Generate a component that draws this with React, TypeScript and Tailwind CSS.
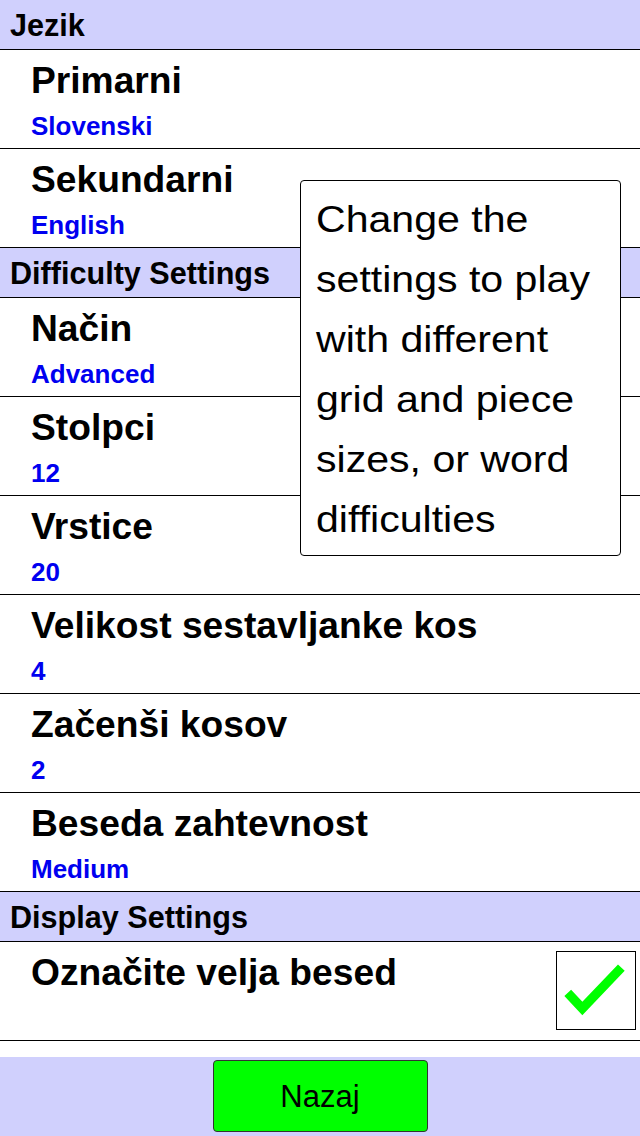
import { Fragment } from 'react';

type Row = { title: string; value?: string; checked?: boolean };
type Section = { heading: string; rows: Row[] };

const sections: Section[] = [
    {
        heading: 'Jezik',
        rows: [
            { title: 'Primarni', value: 'Slovenski' },
            { title: 'Sekundarni', value: 'English' },
        ],
    },
    {
        heading: 'Difficulty Settings',
        rows: [
            { title: 'Način', value: 'Advanced' },
            { title: 'Stolpci', value: '12' },
            { title: 'Vrstice', value: '20' },
            { title: 'Velikost sestavljanke kos', value: '4' },
            { title: 'Začenši kosov', value: '2' },
            { title: 'Beseda zahtevnost', value: 'Medium' },
        ],
    },
    {
        heading: 'Display Settings',
        rows: [{ title: 'Označite velja besed', checked: true }],
    },
];

const tipLines = [
    'Change the',
    'settings to play',
    'with different',
    'grid and piece',
    'sizes, or word',
    'difficulties',
];

function CheckBox({ checked }: { checked: boolean }) {
    return (
        <div className="w-[80px] h-[79px] border border-black bg-white">
            {checked && (
                <svg viewBox="0 0 80 79" className="w-full h-full">
                    <path d="M11 42 L26 58 L66 16" fill="none" stroke="#00ff00" strokeWidth="9.5" strokeLinejoin="miter" />
                </svg>
            )}
        </div>
    );
}

export default function App() {
    return (
        <div className="relative w-[640px] h-[1136px] bg-white flex flex-col font-['Liberation_Sans',Arial,sans-serif] text-black overflow-hidden">
            {sections.map((s) => (
                <Fragment key={s.heading}>
                    {/* en-tête de section */}
                    <div className="h-[50px] border-b border-black bg-[#d0d0fd] pl-[10px] pt-[2px] text-[30.6px] leading-[47px] font-bold">
                        {s.heading}
                    </div>
                    {s.rows.map((r) => (
                        <div key={r.title} className="h-[99px] border-b border-black flex justify-between">
                            <div className="pl-[31px] pt-[12px]">
                                <div className="text-[37.2px] leading-[37px] font-bold">{r.title}</div>
                                {r.value && (
                                    <div className="mt-[14px] text-[26px] leading-[26px] font-bold text-[#0000f0]">{r.value}</div>
                                )}
                            </div>
                            {r.checked !== undefined && (
                                <div className="pt-[9px] pr-[4px]">
                                    <CheckBox checked={r.checked} />
                                </div>
                            )}
                        </div>
                    ))}
                </Fragment>
            ))}

            <div className="h-[16px]" />

            {/* pied de page */}
            <div className="flex-1 bg-[#d0d0fd] flex justify-center pt-[3px]">
                <button className="w-[215px] h-[72px] bg-[#00ff00] border border-[#333] rounded-[4px] text-[31px] leading-none">
                    Nazaj
                </button>
            </div>

            {/* info-bulle */}
            <div className="absolute left-[300px] top-[180px] w-[321px] h-[376px] bg-white border-[1.5px] border-black rounded-[4px] pl-[15px] pt-[9px]">
                {tipLines.map((l) => (
                    <div key={l} className="text-[37px] leading-[60px] whitespace-nowrap origin-left scale-x-[1.11]">
                        {l}
                    </div>
                ))}
            </div>
        </div>
    );
}
